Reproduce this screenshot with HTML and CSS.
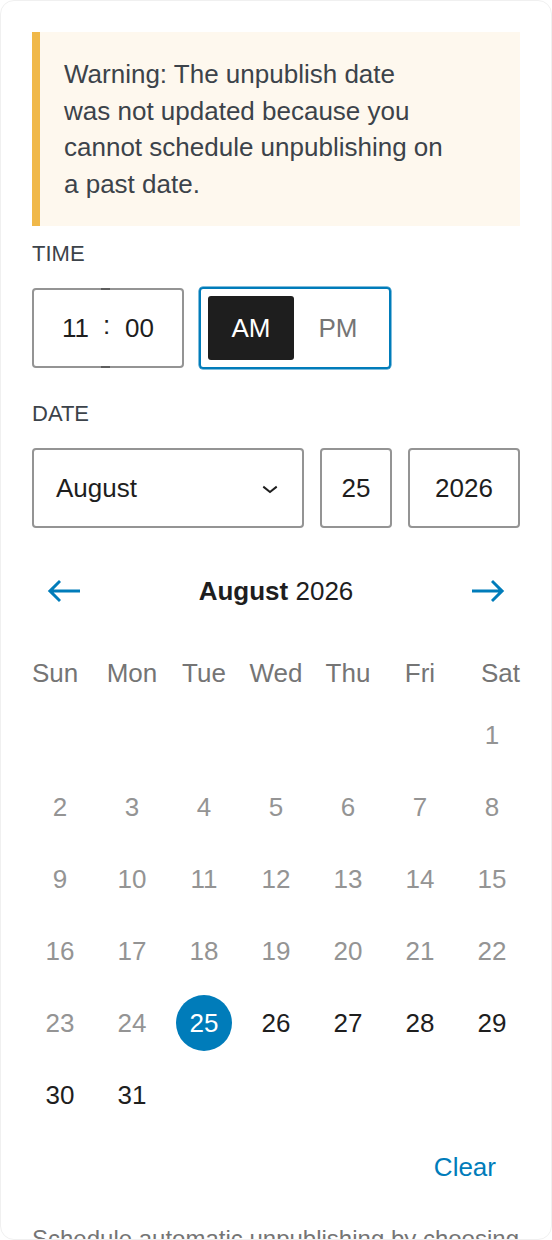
FILE: index.html
```html
<!DOCTYPE html>
<html lang="en">
<head>
    <meta charset="UTF-8">
    <meta name="viewport" content="width=device-width, initial-scale=1.0">
    <title>Unpublish date</title>
    <link rel="stylesheet" href="styles.css">
</head>
<body>
    <div class="popover">
        <div class="notice notice-warning">
            <p>Warning: The unpublish date<br>was not updated because you cannot schedule unpublishing on a past date.</p>
        </div>

        <div class="field field-time">
            <div class="field-label">Time</div>
            <div class="time-row">
                <div class="time-input">
                    <span class="time-hours">11</span>
                    <span class="time-sep">:</span>
                    <span class="time-minutes">00</span>
                </div>
                <div class="ampm">
                    <button class="ampm-btn is-active">AM</button>
                    <button class="ampm-btn">PM</button>
                </div>
            </div>
        </div>

        <div class="field field-date">
            <div class="field-label">Date</div>
            <div class="date-row">
                <div class="date-box date-month">
                    <span>August</span>
                    <svg class="chevron" viewBox="0 0 24 24" width="32" height="32"><path d="M17.5 11.6L12 16l-5.5-4.4.9-1.2L12 14l4.6-3.6.9 1.2z"></path></svg>
                </div>
                <div class="date-box date-day">25</div>
                <div class="date-box date-year">2026</div>
            </div>
        </div>

        <div class="calendar">
            <div class="calendar-nav">
                <button class="nav-btn" aria-label="View previous month">
                    <svg viewBox="0 0 24 24" width="48" height="48"><path d="M20 11.2H6.8l3.7-3.7-1-1L3.9 12l5.6 5.5 1-1-3.7-3.7H20z"></path></svg>
                </button>
                <div class="calendar-title"><strong>August</strong> 2026</div>
                <button class="nav-btn" aria-label="View next month">
                    <svg viewBox="0 0 24 24" width="48" height="48"><path d="m14.5 6.5-1 1 3.7 3.7H4v1.6h13.2l-3.7 3.7 1 1 5.6-5.5z"></path></svg>
                </button>
            </div>

            <div class="calendar-grid">
                <div class="weekday">Sun</div>
                <div class="weekday">Mon</div>
                <div class="weekday">Tue</div>
                <div class="weekday">Wed</div>
                <div class="weekday">Thu</div>
                <div class="weekday">Fri</div>
                <div class="weekday">Sat</div>

                <button class="day is-past first-day">1</button>
                <button class="day is-past">2</button>
                <button class="day is-past">3</button>
                <button class="day is-past">4</button>
                <button class="day is-past">5</button>
                <button class="day is-past">6</button>
                <button class="day is-past">7</button>
                <button class="day is-past">8</button>
                <button class="day is-past">9</button>
                <button class="day is-past">10</button>
                <button class="day is-past">11</button>
                <button class="day is-past">12</button>
                <button class="day is-past">13</button>
                <button class="day is-past">14</button>
                <button class="day is-past">15</button>
                <button class="day is-past">16</button>
                <button class="day is-past">17</button>
                <button class="day is-past">18</button>
                <button class="day is-past">19</button>
                <button class="day is-past">20</button>
                <button class="day is-past">21</button>
                <button class="day is-past">22</button>
                <button class="day is-past">23</button>
                <button class="day is-past">24</button>
                <button class="day is-selected">25</button>
                <button class="day">26</button>
                <button class="day">27</button>
                <button class="day">28</button>
                <button class="day">29</button>
                <button class="day">30</button>
                <button class="day">31</button>
            </div>
        </div>

        <div class="actions">
            <button class="link-btn">Clear</button>
        </div>

        <p class="help">Schedule automatic unpublishing by choosing a date and time.</p>
    </div>
</body>
</html>
```

FILE: styles.css
```css
* {
    margin: 0;
    padding: 0;
    box-sizing: border-box;
}

body {
    font-family: "Liberation Sans", Arial, sans-serif;
    background: #ffffff;
    color: #1e1e1e;
}

button {
    font-family: inherit;
    border: none;
    background: none;
    cursor: pointer;
    color: inherit;
}

.popover {
    height: 100vh;
    overflow: hidden;
    background: #ffffff;
    border: 1px solid #f0f0f0;
    border-radius: 14px;
    padding: 31px;
}

/* Notice */
.notice {
    background: #fef8ee;
    border-left: 8px solid #f0b849;
    padding: 24px;
    margin-bottom: 12px;
}

.notice p {
    max-width: 396px;
    font-size: 26px;
    line-height: 36.5px;
    color: #3c434a;
}

/* Fields */
.field-label {
    font-size: 22px;
    line-height: 32px;
    text-transform: uppercase;
    color: #3c434a;
    margin-bottom: 18px;
}

.field-date {
    margin-top: 30px;
}

.time-row {
    display: flex;
    align-items: center;
    height: 80px;
}

.time-input {
    display: flex;
    align-items: center;
    width: 152px;
    height: 80px;
    border: 2px solid #949494;
    border-radius: 4px;
    font-size: 26px;
}

.time-hours {
    padding: 0 14px 0 28px;
}

.time-sep {
    position: relative;
    align-self: stretch;
    display: flex;
    align-items: center;
    width: 7px;
    padding-bottom: 6px;
}

.time-sep::before,
.time-sep::after {
    content: "";
    position: absolute;
    left: -2px;
    right: 0;
    height: 2px;
    background: #5e5e5e;
}

.time-sep::before {
    top: -2px;
}

.time-sep::after {
    bottom: -2px;
}

.time-minutes {
    padding-left: 15px;
}

.ampm {
    display: flex;
    flex-shrink: 0;
    margin-left: 15px;
    height: 82px;
    padding: 7px;
    border: 2px solid #007cba;
    border-radius: 4px;
    box-shadow: 0 0 0 0.5px #007cba;
}

.ampm-btn {
    width: 86px;
    height: 64px;
    font-size: 26px;
    color: #757575;
    border-radius: 3px;
}

.ampm-btn + .ampm-btn {
    width: 88px;
}

.ampm-btn.is-active {
    background: #1e1e1e;
    color: #ffffff;
}

.date-row {
    display: flex;
    gap: 16px;
}

.date-box {
    height: 80px;
    border: 2px solid #949494;
    border-radius: 4px;
    font-size: 26px;
    display: flex;
    align-items: center;
    justify-content: center;
}

.date-month {
    flex: 1;
    justify-content: space-between;
    padding: 0 16px 0 22px;
}

.chevron {
    fill: #1e1e1e;
}

.date-day {
    width: 72px;
}

.date-year {
    width: 112px;
}

/* Calendar */
.calendar {
    margin-top: 31px;
}

.calendar-nav {
    display: flex;
    align-items: center;
    justify-content: space-between;
    height: 64px;
    margin-bottom: 32px;
}

.nav-btn {
    width: 64px;
    height: 64px;
    display: flex;
    align-items: center;
    justify-content: center;
}

.nav-btn svg {
    fill: #007cba;
}

.calendar-title {
    font-size: 26px;
    color: #1e1e1e;
}

.calendar-grid {
    display: grid;
    grid-template-columns: repeat(7, 1fr);
    column-gap: 16px;
    row-gap: 16px;
    justify-items: center;
}

.weekday {
    font-size: 26px;
    line-height: 36px;
    color: #757575;
}

.weekday:nth-child(1) {
    justify-self: start;
}

.weekday:nth-child(7) {
    justify-self: end;
}

.day {
    width: 56px;
    height: 56px;
    border-radius: 50%;
    font-size: 26px;
    color: #1e1e1e;
}

.day.first-day {
    grid-column-start: 7;
}

.day.is-past {
    color: #949494;
}

.day.is-selected {
    background: #007cba;
    color: #ffffff;
}

.actions {
    display: flex;
    justify-content: flex-end;
    margin-top: 12px;
}

.link-btn {
    height: 64px;
    padding: 0 24px;
    font-size: 26px;
    color: #007cba;
}

.help {
    margin-top: 22px;
    font-size: 24px;
    line-height: 36px;
    color: #757575;
}
```
